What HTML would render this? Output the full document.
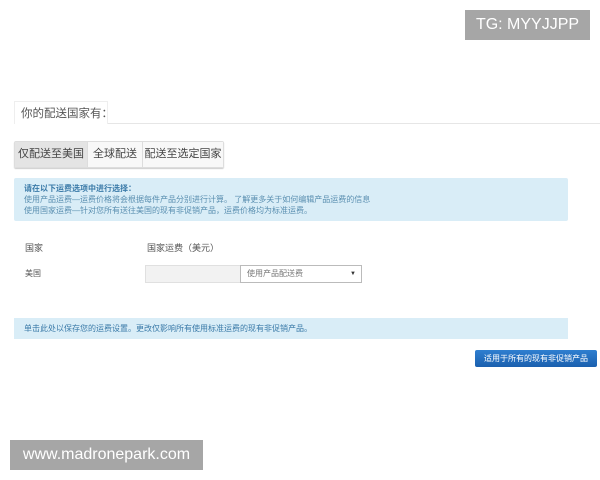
<!DOCTYPE html>
<html><head><meta charset="utf-8"><style>
body{margin:0;width:600px;height:480px;background:#fff;position:relative;overflow:hidden;font-family:"Liberation Sans","Noto Sans CJK SC",sans-serif;}
.a{position:absolute;white-space:nowrap;}
</style></head><body>
<div class="a" style="left:465px;top:10px;width:125px;height:30px;background:#a6a6a6;color:#fff;font-size:16px;line-height:30px;text-align:center;">TG: MYYJJPP</div>
<div class="a" style="left:107px;top:123px;width:493px;height:1px;background:#e6e6e6"></div>
<div class="a" style="left:14px;top:101px;width:94px;height:23px;border:1px solid #eee;border-bottom:none;background:#fff;color:#555;font-size:11.5px;line-height:24px;padding-left:6px;box-sizing:border-box;">你的配送国家有：</div>
<div class="a" style="left:14px;top:141px;height:25px;border:1px solid #ddd;border-radius:2px;display:flex;font-size:11px;color:#444;box-shadow:0 1px 1px #ccc">
<div style="width:72px;background:#e4e4e4;text-align:center;line-height:25px;border-right:1px solid #ddd">仅配送至美国</div>
<div style="width:54px;background:#f8f8f8;text-align:center;line-height:25px;border-right:1px solid #ddd">全球配送</div>
<div style="width:80px;background:#f8f8f8;text-align:center;line-height:25px">配送至选定国家</div></div>
<div class="a" style="left:14px;top:178px;width:554px;height:43px;background:#d9edf7;border-radius:2px;font-size:8px;line-height:11px;color:#5a8fb0;padding:5px 0 0 10px;box-sizing:border-box;">
<b style="color:#3a7aa8">请在以下运费选项中进行选择：</b><br>使用产品运费—运费价格将会根据每件产品分别进行计算。 了解更多关于如何编辑产品运费的信息<br>使用国家运费—针对您所有送往美国的现有非促销产品，运费价格均为标准运费。</div>
<div class="a" style="left:25px;top:241px;font-size:9px;color:#555">国家</div>
<div class="a" style="left:147px;top:241px;font-size:9px;color:#555">国家运费（美元）</div>
<div class="a" style="left:25px;top:268px;font-size:8px;color:#555">美国</div>
<div class="a" style="left:145px;top:265px;width:96px;height:18px;background:#f2f2f2;border:1px solid #e0e0e0;box-sizing:border-box"></div>
<div class="a" style="left:240px;top:265px;width:122px;height:18px;background:#fff;border:1px solid #bbb;box-sizing:border-box;font-size:8px;color:#777;line-height:16px;padding-left:6px">使用产品配送费<span style="position:absolute;right:5px;font-size:6px;color:#333">▼</span></div>
<div class="a" style="left:14px;top:318px;width:554px;height:21px;background:#d9edf7;font-size:8px;line-height:21px;color:#3a7aa8;padding-left:10px;box-sizing:border-box">单击此处以保存您的运费设置。更改仅影响所有使用标准运费的现有非促销产品。</div>
<div class="a" style="left:475px;top:350px;width:122px;height:17px;background:linear-gradient(#2f7fd0,#1a5fae);border-radius:2px;color:#fff;font-size:8px;line-height:17px;text-align:center">适用于所有的现有非促销产品</div>
<div class="a" style="left:10px;top:440px;width:193px;height:30px;background:#a6a6a6;color:#fff;font-size:16px;line-height:30px;text-align:center;">www.madronepark.com</div>
</body></html>
